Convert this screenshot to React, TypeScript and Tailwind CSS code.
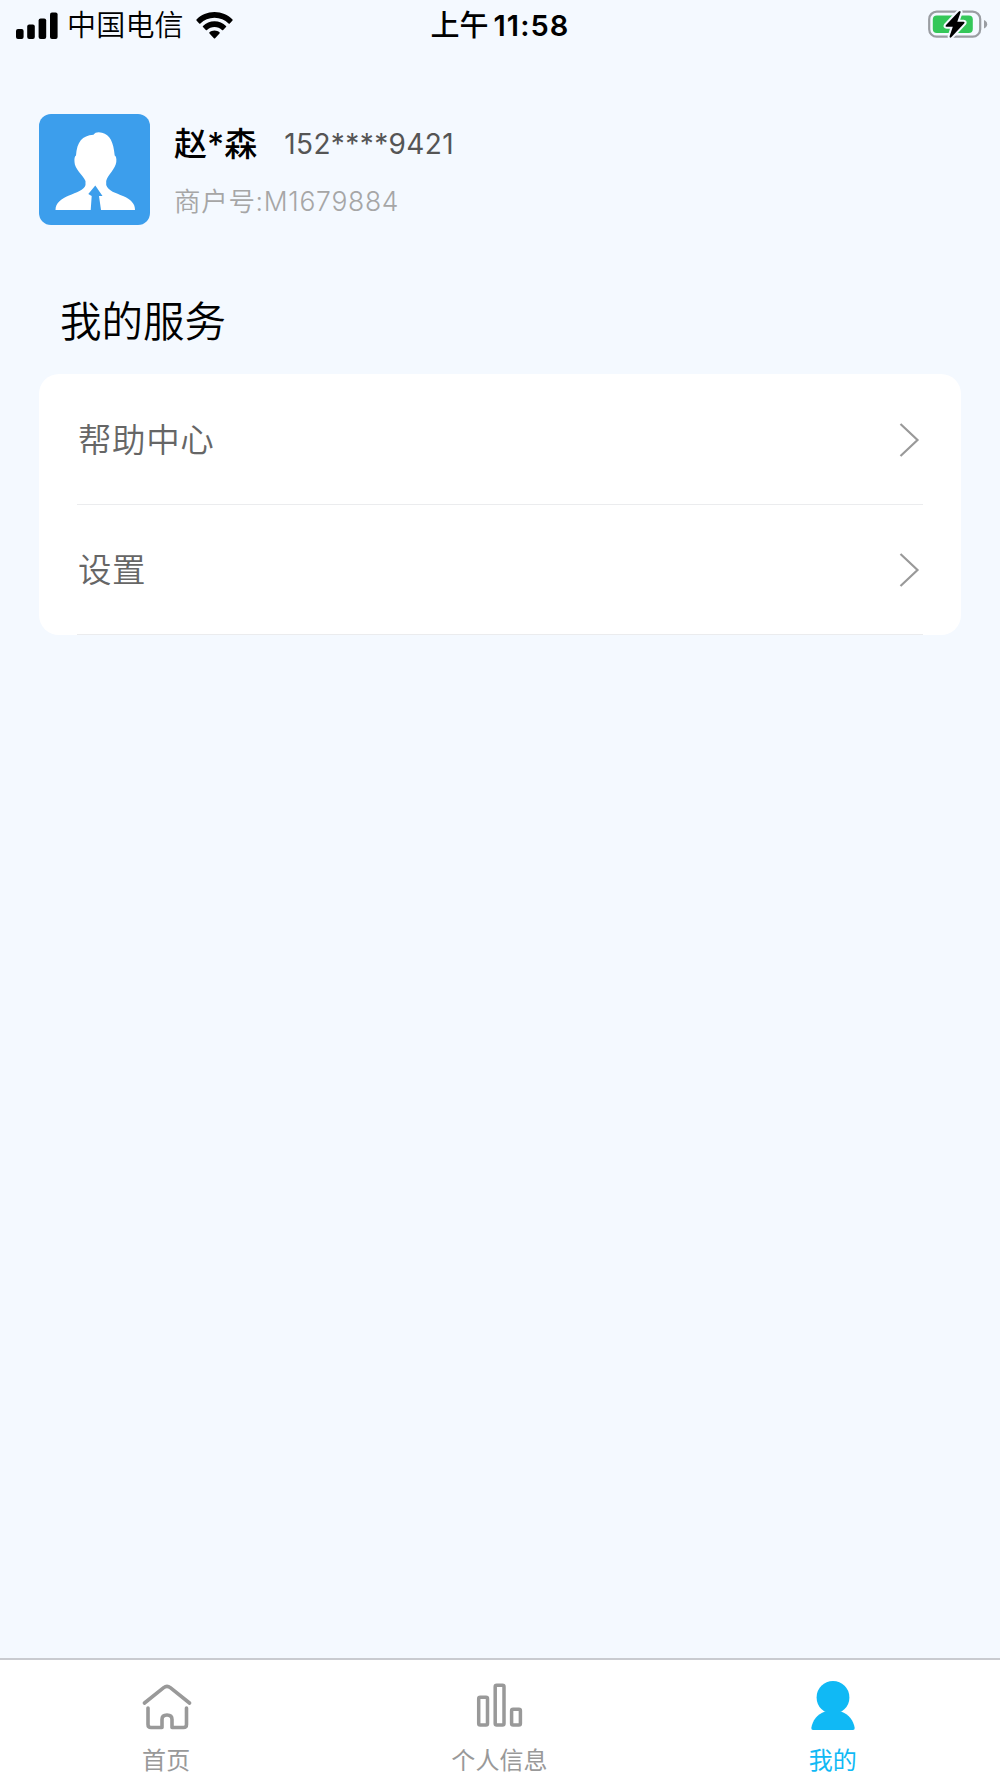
import type { ReactNode } from "react";

function SignalIcon() {
  return (
    <svg className="ml-4 h-[27px] w-[42px]" viewBox="0 0 42 27">
      <rect x="0" y="17" width="7.6" height="10" rx="2" />
      <rect x="11.2" y="12.5" width="7.6" height="14.5" rx="2" />
      <rect x="22.6" y="6.5" width="7.6" height="20.5" rx="2" />
      <rect x="34" y="0.5" width="7.6" height="26.5" rx="2" />
    </svg>
  );
}

function WifiIcon() {
  return (
    <svg className="ml-3 h-[27px] w-[37px]" viewBox="0 0 37 27">
      <path d="M18.5 0C25.6 0 31.9 2.8 36.5 7.4Q37 8 36.5 8.6L33.8 11.4Q33.2 12 32.6 11.4C28.9 7.8 24 5.7 18.5 5.7S8.1 7.8 4.4 11.4Q3.8 12 3.2 11.4L.5 8.6Q0 8 .5 7.4C5.1 2.8 11.4 0 18.5 0Z" />
      <path d="M18.5 9.3C23 9.3 27 11 30 13.9Q30.6 14.5 30 15.1L27.2 17.9Q26.6 18.5 26 17.9C24 16 21.4 14.9 18.5 14.9S13 16 11 17.9Q10.4 18.5 9.8 17.9L7 15.1Q6.4 14.5 7 13.9C10 11 14 9.3 18.5 9.3Z" />
      <path d="M18.5 18.4C20.5 18.4 22.2 19.1 23.5 20.3Q24.1 20.9 23.5 21.5L19.1 26.2Q18.5 26.8 17.9 26.2L13.5 21.5Q12.9 20.9 13.5 20.3C14.8 19.1 16.5 18.4 18.5 18.4Z" />
    </svg>
  );
}

function BatteryIcon() {
  return (
    <svg className="mr-3 h-[30px] w-[60px]" viewBox="0 0 60 30">
      <rect x="1.2" y="1.7" width="51" height="25" rx="7.5" fill="none" stroke="#9a9da2" strokeWidth="2.2" />
      <rect x="4.8" y="5.5" width="40" height="17.5" rx="4" fill="#34c759" />
      <path d="M56 10C58 10.7 59.2 12.3 59.2 14.2S58 17.7 56 18.5Z" fill="#9a9da2" />
      <path
        d="M30.8 1.5L17.8 15.2Q17 16.7 18.6 16.7H24.8L21.6 26.3Q21.5 28.6 23.5 27.1L36.3 13.3Q37.2 11.8 35.6 11.8H29.3L32.6 2.3Q32.6 .2 30.8 1.5Z"
        stroke="#f4f9ff"
        strokeWidth="4"
        paintOrder="stroke"
      />
    </svg>
  );
}

function Avatar() {
  return (
    <svg className="h-[111px] w-[111px] shrink-0" viewBox="0 0 111 111">
      <rect width="111" height="111" rx="12" fill="#3c9eec" />
      <path
        d="M54.5 20.8C56 18 60 17.7 63 18.8C71 21 74.5 28 75.7 41.5Q77.8 42.5 77.3 48C76.5 55 68.5 61 67.2 67V71C69 77 77 79 84 82C92 85.5 96 89.5 96 96H62L60 82H63.5L56.3 71.5L49.3 80L52.7 82L51.7 96H16.5C16.5 89 22 85 30 81.5C37 78.5 45.5 76 46.5 71V67C44 61 35.5 55 35.5 48Q35 42.5 37 41.5C38 28 43 21.5 54.5 20.8Z"
        fill="#fff"
      />
    </svg>
  );
}

function ServiceRow({ label }: { label: string }) {
  return (
    <div className="flex h-[130.5px] items-center justify-between border-b border-[#ebecee] pt-[2px] pl-px pr-[2px]">
      <span className="text-[33.5px] leading-[50px] font-[350] tracking-[0.6px] text-[#666]">{label}</span>
      <svg className="h-[34px] w-[22px]" viewBox="0 0 22 34" fill="none" stroke="#999" strokeWidth="2.2">
        <path d="M1.5 1L18.5 17L1.5 33" />
      </svg>
    </div>
  );
}

function Tab({ label, active, children }: { label: string; active?: boolean; children: ReactNode }) {
  return (
    <div className={`flex flex-1 flex-col items-center pt-[21px] ${active ? "text-[#10b9f5]" : "text-[#999]"}`}>
      <svg className="h-[50px] w-[50px]" viewBox="0 0 50 50" fill="none">
        {children}
      </svg>
      <span className="mt-[13px] mr-px text-[24px] leading-[34px] tracking-[0.1px]">{label}</span>
    </div>
  );
}

export default function App() {
  return (
    <div className="flex h-[1778px] w-[1000px] flex-col overflow-hidden bg-[#f4f9ff] font-['Inter','Noto_Sans_CJK_SC',sans-serif] text-black">
      {/* Status bar */}
      <header className="grid h-[49px] grid-cols-3 items-center">
        <div className="flex items-center">
          <SignalIcon />
          <span className="ml-[9px] pt-[2px] text-[29px] leading-[46px] font-[350] tracking-[0.2px]">中国电信</span>
          <WifiIcon />
        </div>
        <div className="flex items-center justify-center gap-[5px] pt-[2px] leading-[48px]">
          <span className="text-[29px] font-medium">上午</span>
          <span className="text-[29px] font-semibold tracking-[1.1px]">11:58</span>
        </div>
        <div className="flex justify-end">
          <BatteryIcon />
        </div>
      </header>

      {/* Profile */}
      <section className="mt-[65px] flex pl-[39px]">
        <Avatar />
        <div className="ml-6 flex flex-col">
          <div className="flex h-[60px] items-center">
            <span className="pt-[2px] text-[33px] font-medium">赵*森</span>
            <span className="ml-[27px] text-[28px] tracking-[0.4px] text-[#555]">152****9421</span>
          </div>
          <div className="flex h-[56px] items-center text-[26.5px] font-[350] tracking-[0.7px] text-[#a6a6a6]">
            商户号:M1679884
          </div>
        </div>
      </section>

      {/* Services */}
      <main className="flex-1 px-[39px]">
        <h2 className="mt-[62px] pl-[21px] text-[41.5px] leading-[60px] font-[350]">我的服务</h2>
        <div className="mt-[22px] rounded-[20px] bg-white px-[38px]">
          <ServiceRow label="帮助中心" />
          <ServiceRow label="设置" />
        </div>
      </main>

      {/* Tab bar */}
      <nav className="flex h-[120px] border-t-2 border-[#c9cbd0] bg-white">
        <Tab label="首页">
          <path
            d="M2.5 22L21.7 6.6Q25 4 28.3 6.6L47.5 22M6 27V43.5Q6 46.5 9 46.5H20V38.5Q20 34 25 34T30 38.5V46.5H41.5Q44.5 46.5 44.5 43.5V27"
            stroke="currentColor"
            strokeWidth="3.6"
            strokeLinecap="round"
            strokeLinejoin="round"
          />
        </Tab>
        <Tab label="个人信息">
          <g stroke="currentColor" strokeWidth="3.5">
            <rect x="3.7" y="16.2" width="8.8" height="27.8" rx="1.5" />
            <rect x="20.2" y="4.2" width="8.8" height="39.8" rx="1.5" />
            <rect x="36.6" y="28.2" width="8.8" height="15.8" rx="1.5" />
          </g>
        </Tab>
        <Tab label="我的" active>
          <g fill="currentColor">
            <circle cx="25" cy="16.4" r="16.4" />
            <path d="M17 30.5H33C41 33.5 45.5 39.5 46.7 47Q46.8 49 45 49H5Q3.2 49 3.3 47C4.5 39.5 9 33.5 17 30.5Z" />
          </g>
        </Tab>
      </nav>
    </div>
  );
}
